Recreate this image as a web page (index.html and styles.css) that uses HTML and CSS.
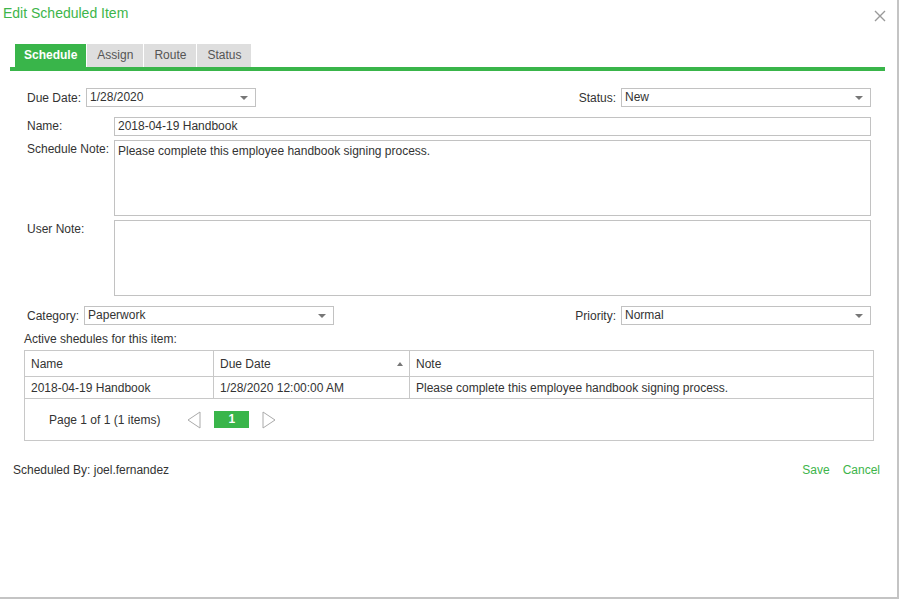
FILE: index.html
```html
<!DOCTYPE html>
<html lang="en">
<head>
  <meta charset="UTF-8" />
  <title>Edit Scheduled Item</title>
  <link rel="stylesheet" href="styles.css">
</head>
<body>
  <div class="dialog">
    <div class="titlebar">
      <span class="title">Edit Scheduled Item</span>
      <svg class="close" width="12" height="12" viewBox="0 0 12 12">
        <path d="M1 1 L11 11 M11 1 L1 11" stroke="#9a9a9a" stroke-width="1.4" fill="none"/>
      </svg>
    </div>

    <div class="tabs">
      <div class="tab active">Schedule</div>
      <div class="tab">Assign</div>
      <div class="tab">Route</div>
      <div class="tab">Status</div>
    </div>

    <div class="form">
      <div class="row split">
        <div class="field">
          <label>Due Date:</label>
          <div class="select w170">1/28/2020<span class="caret"></span></div>
        </div>
        <div class="field">
          <label>Status:</label>
          <div class="select w250">New<span class="caret"></span></div>
        </div>
      </div>

      <div class="row line gap-top">
        <label class="lbl">Name:</label>
        <div class="input">2018-04-19 Handbook</div>
      </div>

      <div class="row line tight">
        <label class="lbl">Schedule Note:</label>
        <div class="textarea">Please complete this employee handbook signing process.</div>
      </div>

      <div class="row line tight">
        <label class="lbl">User Note:</label>
        <div class="textarea"></div>
      </div>

      <div class="row split gap-top">
        <div class="field">
          <label>Category:</label>
          <div class="select w250">Paperwork<span class="caret"></span></div>
        </div>
        <div class="field">
          <label>Priority:</label>
          <div class="select w250">Normal<span class="caret"></span></div>
        </div>
      </div>
    </div>

    <div class="active-label">Active shedules for this item:</div>

    <div class="grid">
      <div class="grid-row head">
        <div class="cell c1">Name</div>
        <div class="cell c2">Due Date<span class="sort"></span></div>
        <div class="cell c3">Note</div>
      </div>
      <div class="grid-row body">
        <div class="cell c1">2018-04-19 Handbook</div>
        <div class="cell c2">1/28/2020 12:00:00 AM</div>
        <div class="cell c3">Please complete this employee handbook signing process.</div>
      </div>
      <div class="pager">
        <span class="pager-info">Page 1 of 1 (1 items)</span>
        <svg class="arrow prev" width="14" height="18" viewBox="0 0 14 18">
          <path d="M13 1 L1 9 L13 17 Z" fill="none" stroke="#aaa" stroke-width="1"/>
        </svg>
        <span class="page">1</span>
        <svg class="arrow next" width="14" height="18" viewBox="0 0 14 18">
          <path d="M1 1 L13 9 L1 17 Z" fill="none" stroke="#aaa" stroke-width="1"/>
        </svg>
      </div>
    </div>

    <div class="footer">
      <span>Scheduled By: joel.fernandez</span>
      <div class="actions">
        <a href="#">Save</a>
        <a href="#">Cancel</a>
      </div>
    </div>
  </div>
</body>
</html>
```

FILE: styles.css
```css
* { margin: 0; padding: 0; box-sizing: border-box; }
body {
  font-family: 'Liberation Sans', Arial, sans-serif;
  font-size: 12px;
  color: #333;
  background: #fff;
}

.dialog {
  width: 899px;
  height: 599px;
  border-right: 2px solid #c4c4c4;
  border-bottom: 2px solid #c4c4c4;
  background: #fff;
}

/* title */
.titlebar {
  display: flex;
  justify-content: space-between;
  align-items: center;
  height: 26px;
  padding: 0 11px 0 3px;
}
.title {
  color: #3db54a;
  font-size: 14px;
}
.close { margin-top: 5px; }

/* tabs */
.tabs {
  display: flex;
  gap: 1px;
  margin: 18px 12px 0 10px;
  padding-left: 5px;
  border-bottom: 4px solid #39b54a;
}
.tab {
  height: 23px;
  line-height: 23px;
  padding: 0 10px;
  background: #dedede;
  color: #555;
}
.tab.active {
  background: #39b54a;
  color: #fff;
  font-weight: bold;
  padding: 0 9px;
}

/* form */
.form {
  padding: 17px 26px 0 27px;
}
.row { display: flex; }
.split { justify-content: space-between; }
.field {
  display: flex;
  align-items: center;
  gap: 5px;
}
.gap-top { margin-top: 10px; }
.tight { margin-top: 4px; }
.line { align-items: flex-start; }
.lbl {
  width: 87px;
  flex-shrink: 0;
  padding-top: 2px;
}
.select, .input {
  position: relative;
  height: 19px;
  line-height: 17px;
  border: 1px solid #c2c2c2;
  padding: 0 3px;
}
.input { flex: 1; }
.w170 { width: 170px; }
.w250 { width: 250px; }
.caret {
  position: absolute;
  right: 7px;
  top: 7px;
  border-left: 4px solid transparent;
  border-right: 4px solid transparent;
  border-top: 4px solid #777;
}
.textarea {
  flex: 1;
  height: 76px;
  border: 1px solid #c2c2c2;
  padding: 3px 3px;
}

/* grid */
.active-label {
  margin: 6px 0 0 24px;
  line-height: 16px;
}
.grid {
  margin: 3px 23px 0 24px;
  border: 1px solid #c8c8c8;
}
.grid-row {
  display: flex;
  border-bottom: 1px solid #c8c8c8;
}
.grid-row.head { height: 26px; }
.grid-row.body { height: 22px; }
.cell {
  display: flex;
  align-items: center;
  padding-left: 6px;
}
.c1 { width: 189px; border-right: 1px solid #c8c8c8; }
.c2 {
  width: 196px;
  border-right: 1px solid #c8c8c8;
  position: relative;
}
.c3 { flex: 1; }
.sort {
  position: absolute;
  right: 6px;
  top: 11px;
  border-left: 3px solid transparent;
  border-right: 3px solid transparent;
  border-bottom: 4px solid #777;
}
.pager {
  display: flex;
  align-items: center;
  height: 41px;
  padding-left: 24px;
}
.pager-info { margin-right: 27px; }
.page {
  width: 35px;
  height: 17px;
  line-height: 17px;
  margin: 0 13px;
  text-align: center;
  background: #39b54a;
  color: #fff;
  font-weight: bold;
}

/* footer */
.footer {
  display: flex;
  justify-content: space-between;
  align-items: center;
  margin-top: 22px;
  padding: 0 17px 0 13px;
}
.actions {
  display: flex;
  gap: 13px;
}
.actions a {
  color: #3db54a;
  text-decoration: none;
}
```
